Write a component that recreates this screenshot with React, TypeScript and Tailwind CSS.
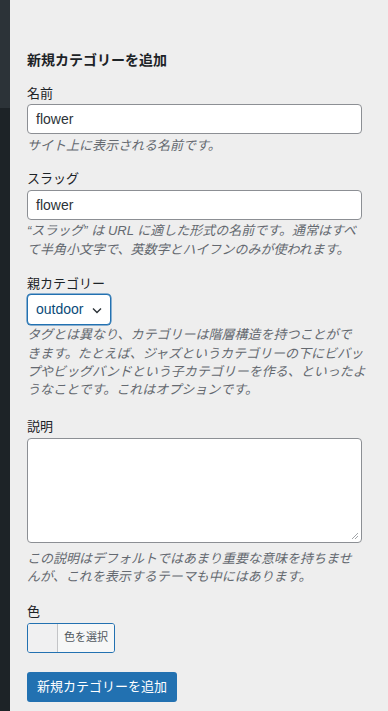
import React from 'react';

const font = { fontFamily: '"Liberation Sans", "Noto Sans CJK JP", sans-serif' };

const Label = ({ children }: { children: React.ReactNode }) => (
  <div className="text-[13px] leading-[18px] text-[#1d2327]">{children}</div>
);

const Help = ({ children, className = '' }: { children: React.ReactNode; className?: string }) => (
  <p className={`text-[13px] leading-[18.4px] italic text-[#646970] ${className}`}>{children}</p>
);

const App = () => {
  return (
    <div className="flex min-h-[711px] w-[388px] bg-[#eeeeee]" style={font}>
      <div className="flex w-[10px] shrink-0 flex-col">
        <div className="h-[108px] bg-[#2c3338]" />
        <div className="flex-1 bg-[#1d2327]" />
      </div>

      <div className="w-[352px] pl-[17px] pt-[50px]">
        <h2 className="text-[14px] leading-[20px] font-semibold text-[#1d2327]">新規カテゴリーを追加</h2>

        {/* 名前 */}
        <div className="mt-[15px]">
          <Label>名前</Label>
          <div className="mt-px flex h-[30px] items-center rounded-[4px] border border-[#8c8f94] bg-white px-2 text-[14px] text-[#2c3338]">
            flower
          </div>
          <Help className="mt-[3px]">サイト上に表示される名前です。</Help>
        </div>

        {/* スラッグ */}
        <div className="mt-[15px]">
          <Label>スラッグ</Label>
          <div className="mt-[2px] flex h-[30px] items-center rounded-[4px] border border-[#8c8f94] bg-white px-2 text-[14px] text-[#2c3338]">
            flower
          </div>
          <Help className="mt-[2px]">
            “スラッグ” は URL に適した形式の名前です。通常はすべて半角小文字で、英数字とハイフンのみが使われます。
          </Help>
        </div>

        {/* 親カテゴリー */}
        <div className="mt-[16px]">
          <Label>親カテゴリー</Label>
          <div className="mt-px flex h-[31px] w-[84px] items-center justify-between rounded-[4px] border-[1.5px] border-[#2271b1] bg-white pl-[8px] pr-[8px] text-[14px] text-[#0a4b78] shadow-[0_0_0_0.5px_#2271b1]">
            <span>outdoor</span>
            <svg width="10" height="7" viewBox="0 0 10 7" className="mt-[2px]">
              <path d="M1 1.5 L5 5.5 L9 1.5" fill="none" stroke="#2c3338" strokeWidth="1.4" />
            </svg>
          </div>
          <Help className="mt-px whitespace-nowrap">
            タグとは異なり、カテゴリーは階層構造を持つことがで
            <br />
            きます。たとえば、ジャズというカテゴリーの下にビバッ
            <br />
            プやビッグバンドという子カテゴリーを作る、といったよ
            <br />
            うなことです。これはオプションです。
          </Help>
        </div>

        {/* 説明 */}
        <div className="mt-[18px]">
          <Label>説明</Label>
          <div className="relative mt-[2px] h-[105px] rounded-[4px] border border-[#8c8f94] bg-white">
            <svg width="8" height="8" viewBox="0 0 8 8" className="absolute bottom-[2px] right-[2px]">
              <path d="M7 1 L1 7 M7 4 L4 7" stroke="#8c8f94" strokeWidth="0.8" />
            </svg>
          </div>
          <Help className="mt-[7px]">
            この説明はデフォルトではあまり重要な意味を持ちませんが、これを表示するテーマも中にはあります。
          </Help>
        </div>

        {/* 色 */}
        <div className="mt-[16px]">
          <Label>色</Label>
          <div className="mt-[2px] flex h-[30px] w-[88px] overflow-hidden rounded-[3px] border border-[#2271b1]">
            <div className="w-[30px] border-r border-[#c3c4c7] bg-[#f0f0f1]" />
            <div className="flex flex-1 items-center justify-center bg-[#f6f7f7] text-[11px] text-[#50575e]">色を選択</div>
          </div>
        </div>

        <button className="mt-[19px] h-[30px] rounded-[3px] bg-[#2271b1] px-[10px] text-[13px] text-white">
          新規カテゴリーを追加
        </button>
      </div>
    </div>
  );
};

export default App;
